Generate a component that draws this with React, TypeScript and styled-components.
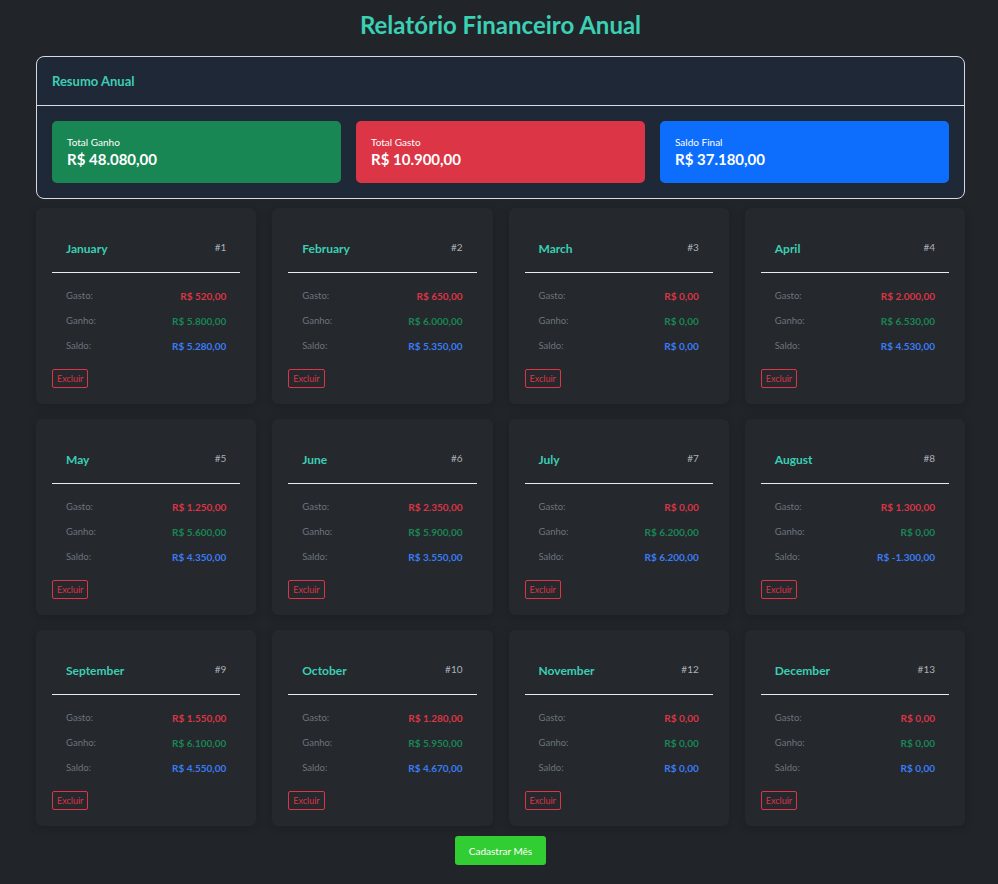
import React from "react";
import styled, { createGlobalStyle } from "styled-components";

const Global = createGlobalStyle`
  html, body { margin: 0; padding: 0; background: #212529; }
  body { font-family: Lato, "Noto Sans", sans-serif; color: #fff; }
  * { box-sizing: border-box; }
`;

const Page = styled.div`
  width: 929px;
  margin-left: 36px;
  padding-bottom: 19px;
  display: flex;
  flex-direction: column;
`;

const Title = styled.h1`
  margin: 10px 0 17px;
  text-align: center;
  font-size: 24px;
  line-height: 29px;
  font-weight: 700;
  color: #3bcfb4;
`;

const Summary = styled.section`
  border: 1px solid #d6dbe0;
  border-radius: 8px;
  background: #1f2837;
  overflow: hidden;
`;

const SummaryHeader = styled.div`
  height: 49px;
  display: flex;
  align-items: center;
  padding: 0 15px;
  border-bottom: 1px solid #d6dbe0;
  font-size: 13px;
  font-weight: 700;
  color: #3bcfb4;
`;

const SummaryBody = styled.div`
  display: grid;
  grid-template-columns: repeat(3, 1fr);
  gap: 15px;
  padding: 15px 15px 15px;
`;

const StatBox = styled.div<{ $bg: string }>`
  height: 62px;
  border-radius: 5px;
  background: ${(p) => p.$bg};
  padding: 14px 15px;
  display: flex;
  flex-direction: column;
`;

const StatLabel = styled.div`
  font-size: 10px;
  line-height: 14px;
`;

const StatValue = styled.div`
  font-size: 15px;
  line-height: 20px;
  font-weight: 700;
`;

const Grid = styled.div`
  margin-top: 9px;
  display: grid;
  grid-template-columns: repeat(4, 1fr);
  column-gap: 16px;
  row-gap: 15px;
`;

const Card = styled.div`
  background: #25282d;
  border-radius: 6px;
  box-shadow: 0 2px 8px rgba(0, 0, 0, 0.18);
  padding: 16px;
  display: flex;
  flex-direction: column;
  align-items: flex-start;
`;

const CardHeader = styled.div`
  align-self: stretch;
  height: 49px;
  display: flex;
  align-items: center;
  justify-content: space-between;
  padding: 0 14px;
  border-bottom: 1px solid #e9ecef;
`;

const MonthName = styled.span`
  font-size: 12px;
  font-weight: 700;
  color: #3bcfb4;
`;

const MonthId = styled.span`
  font-size: 10px;
  color: #aab1b8;
  margin-top: -2px;
`;

const Rows = styled.div`
  align-self: stretch;
  padding: 10px 14px 0;
  display: flex;
  flex-direction: column;
`;

const Row = styled.div`
  height: 25px;
  display: flex;
  align-items: center;
  justify-content: space-between;
`;

const RowLabel = styled.span`
  font-size: 9.5px;
  color: #6c757d;
`;

const RowValue = styled.span<{ $c: string }>`
  font-size: 10px;
  font-weight: 700;
  color: ${(p) => p.$c};
`;

const DeleteButton = styled.button`
  margin-top: 11px;
  height: 19px;
  padding: 0 4px;
  border: 1px solid #dc3545;
  border-radius: 2px;
  background: transparent;
  color: #dc3545;
  font-family: inherit;
  font-size: 9px;
  cursor: pointer;
`;

const Footer = styled.div`
  margin-top: 10px;
  display: flex;
  justify-content: center;
`;

const AddButton = styled.button`
  width: 91px;
  height: 29px;
  border: none;
  border-radius: 3px;
  background: #32cd32;
  color: #fff;
  font-family: inherit;
  font-size: 10px;
  cursor: pointer;
`;

const RED = "#dc3545";
const GREEN = "#198754";
const BLUE = "#3b7cf5";

const months = [
  { name: "January", id: 1, gasto: "520,00", ganho: "5.800,00", saldo: "5.280,00" },
  { name: "February", id: 2, gasto: "650,00", ganho: "6.000,00", saldo: "5.350,00" },
  { name: "March", id: 3, gasto: "0,00", ganho: "0,00", saldo: "0,00" },
  { name: "April", id: 4, gasto: "2.000,00", ganho: "6.530,00", saldo: "4.530,00" },
  { name: "May", id: 5, gasto: "1.250,00", ganho: "5.600,00", saldo: "4.350,00" },
  { name: "June", id: 6, gasto: "2.350,00", ganho: "5.900,00", saldo: "3.550,00" },
  { name: "July", id: 7, gasto: "0,00", ganho: "6.200,00", saldo: "6.200,00" },
  { name: "August", id: 8, gasto: "1.300,00", ganho: "0,00", saldo: "-1.300,00" },
  { name: "September", id: 9, gasto: "1.550,00", ganho: "6.100,00", saldo: "4.550,00" },
  { name: "October", id: 10, gasto: "1.280,00", ganho: "5.950,00", saldo: "4.670,00" },
  { name: "November", id: 12, gasto: "0,00", ganho: "0,00", saldo: "0,00" },
  { name: "December", id: 13, gasto: "0,00", ganho: "0,00", saldo: "0,00" },
];

export default function App() {
  return (
    <>
      <Global />
      <Page>
        <Title>Relatório Financeiro Anual</Title>
        <Summary>
          <SummaryHeader>Resumo Anual</SummaryHeader>
          <SummaryBody>
            <StatBox $bg="#198754">
              <StatLabel>Total Ganho</StatLabel>
              <StatValue>R$ 48.080,00</StatValue>
            </StatBox>
            <StatBox $bg="#dc3545">
              <StatLabel>Total Gasto</StatLabel>
              <StatValue>R$ 10.900,00</StatValue>
            </StatBox>
            <StatBox $bg="#0d6efd">
              <StatLabel>Saldo Final</StatLabel>
              <StatValue>R$ 37.180,00</StatValue>
            </StatBox>
          </SummaryBody>
        </Summary>
        <Grid>
          {months.map((m) => (
            <Card key={m.id}>
              <CardHeader>
                <MonthName>{m.name}</MonthName>
                <MonthId>#{m.id}</MonthId>
              </CardHeader>
              <Rows>
                <Row>
                  <RowLabel>Gasto:</RowLabel>
                  <RowValue $c={RED}>R$ {m.gasto}</RowValue>
                </Row>
                <Row>
                  <RowLabel>Ganho:</RowLabel>
                  <RowValue $c={GREEN}>R$ {m.ganho}</RowValue>
                </Row>
                <Row>
                  <RowLabel>Saldo:</RowLabel>
                  <RowValue $c={BLUE}>R$ {m.saldo}</RowValue>
                </Row>
              </Rows>
              <DeleteButton>Excluir</DeleteButton>
            </Card>
          ))}
        </Grid>
        <Footer>
          <AddButton>Cadastrar Mês</AddButton>
        </Footer>
      </Page>
    </>
  );
}
